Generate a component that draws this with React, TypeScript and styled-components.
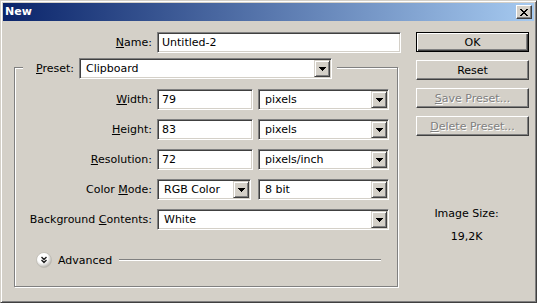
import React from 'react'
import styled, { createGlobalStyle, css } from 'styled-components'

const GlobalStyle = createGlobalStyle`
  html, body {
    margin: 0;
    padding: 0;
    background: #d4d0c8;
  }
  body {
    font-family: 'DejaVu Sans', 'Liberation Sans', sans-serif;
    font-size: 11px;
    color: #000;
  }
  * {
    box-sizing: border-box;
  }
`

const raised = css`
  background: #d4d0c8;
  border: 1px solid;
  border-color: #fff #404040 #404040 #fff;
  box-shadow: inset -1px -1px #808080;
`

const sunken = css`
  background: #fff;
  border: 1px solid;
  border-color: #808080 #fff #fff #808080;
  box-shadow: inset 1px 1px #404040, inset -1px -1px #d4d0c8;
`

const Window = styled.div`
  width: 537px;
  height: 303px;
  background: #d4d0c8;
  border: 1px solid;
  border-color: #d4d0c8 #404040 #404040 #d4d0c8;
  box-shadow: inset 1px 1px #fff, inset -1px -1px #808080;
  padding: 2px;
  display: flex;
  flex-direction: column;
`

const TitleBar = styled.div`
  height: 18px;
  flex: none;
  background: linear-gradient(to right, #0a246a, #a6caf0);
  display: flex;
  align-items: center;
  justify-content: space-between;
  padding: 0 2px 0 2px;
`

const Title = styled.span`
  color: #fff;
  font-weight: bold;
  font-size: 11px;
  line-height: 18px;
`

const CloseButton = styled.div`
  ${raised};
  width: 16px;
  height: 14px;
  display: flex;
  align-items: center;
  justify-content: center;
`

const Body = styled.div`
  display: flex;
  padding: 11px 0 0 11px;
`

const FormColumn = styled.div`
  width: 387px;
  display: flex;
  flex-direction: column;
`

const Row = styled.div`
  display: grid;
  grid-template-columns: 137px auto;
  column-gap: 5px;
  align-items: center;
`

const NameRow = styled(Row)`
  grid-template-columns: 138px 244px;
`

const Label = styled.label`
  text-align: right;
  white-space: nowrap;
`

const U = styled.span`
  text-decoration: underline;
`

const Fields = styled.div`
  display: grid;
  grid-template-columns: 96px 131px;
  column-gap: 5px;
`

const TextInput = styled.div<{ $w?: number }>`
  ${sunken};
  width: ${p => (p.$w ? `${p.$w}px` : '100%')};
  height: 21px;
  padding: 0 4px;
  display: flex;
  align-items: center;
  white-space: nowrap;
`

const SelectBox = styled.div<{ $w: number }>`
  ${sunken};
  width: ${p => p.$w}px;
  height: 21px;
  padding: 1px 1px 1px 6px;
  display: flex;
  align-items: center;
  justify-content: space-between;
  white-space: nowrap;
`

const DropButton = styled.div`
  background: #d4d0c8;
  border: 1px solid;
  border-color: #d4d0c8 #404040 #404040 #d4d0c8;
  box-shadow: inset 1px 1px #fff, inset -1px -1px #808080;
  width: 16px;
  height: 17px;
  flex: none;
  display: flex;
  align-items: center;
  justify-content: center;
`

const GroupBox = styled.fieldset`
  width: 384px;
  margin: 2px 0 0 0;
  padding: 10px 0 18px 0;
  border: 1px solid #808080;
  box-shadow: inset 1px 1px #fff, 1px 1px #fff;
  min-width: 0;
  display: flex;
  flex-direction: column;
  gap: 9px;
`

const Legend = styled.legend`
  margin-left: 8px;
  padding: 3px 5px 0 13px;
  background: #d4d0c8;
`

const LegendInner = styled.div`
  display: flex;
  align-items: center;
  gap: 5px;
`

const AdvancedRow = styled.div`
  display: flex;
  align-items: center;
  height: 16px;
  margin-top: 13px;
  padding: 0 16px 0 21px;
  gap: 6px;
`

const Rule = styled.div`
  flex: 1;
  margin-left: 1px;
  border-top: 1px solid #808080;
  border-bottom: 1px solid #fff;
`

const SideColumn = styled.div`
  width: 113px;
  margin-left: 15px;
  display: flex;
  flex-direction: column;
  gap: 8px;
`

const Button = styled.div<{ $default?: boolean; $disabled?: boolean }>`
  ${raised};
  height: 20px;
  display: flex;
  align-items: center;
  justify-content: center;
  ${p =>
    p.$default &&
    css`
      border: 1px solid #000;
      box-shadow: inset 1px 1px #fff, inset -1px -1px #404040, inset -2px -2px #808080;
    `}
  ${p =>
    p.$disabled &&
    css`
      color: #808080;
      text-shadow: 1px 1px #fff;
    `}
`

const SizeInfo = styled.div`
  margin-top: 63px;
  padding-right: 12px;
  text-align: center;
  display: flex;
  flex-direction: column;
  gap: 10px;
  line-height: 13px;
`

const Arrow = () => (
  <svg width='7' height='4' viewBox='0 0 7 4'>
    <path d='M0 0h7v1h-1v1h-1v1h-1v1h-1v-1h-1v-1h-1v-1h-1z' fill='#000' />
  </svg>
)

const Select = ({ w, value }: { w: number; value: string }) => (
  <SelectBox $w={w}>
    <span>{value}</span>
    <DropButton>
      <Arrow />
    </DropButton>
  </SelectBox>
)

const CloseGlyph = () => (
  <svg width='8' height='7' viewBox='0 0 8 7' shapeRendering='crispEdges'>
    <path
      d='M0 0h2v1h-2zM6 0h2v1h-2zM1 1h2v1h-2zM5 1h2v1h-2zM2 2h4v1h-4zM3 3h2v1h-2zM2 4h4v1h-4zM1 5h2v1h-2zM5 5h2v1h-2zM0 6h2v1h-2zM6 6h2v1h-2z'
      fill='#000'
    />
  </svg>
)

const AdvancedIcon = () => (
  <svg width='16' height='16' viewBox='0 0 16 16'>
    <defs>
      <radialGradient id='adv' cx='0.4' cy='0.35' r='0.7'>
        <stop offset='0.5' stopColor='#ffffff' />
        <stop offset='1' stopColor='#a8a59e' />
      </radialGradient>
    </defs>
    <circle cx='8' cy='8' r='7.5' fill='url(#adv)' stroke='#bdbab2' strokeWidth='0.8' />
    <path d='M5.5 5l2.5 2.5 2.5-2.5M5.5 8l2.5 2.5 2.5-2.5' fill='none' stroke='#202020' strokeWidth='1.4' />
  </svg>
)

const rows = [
  { label: ['', 'W', 'idth:'], value: '79', unit: 'pixels' },
  { label: ['', 'H', 'eight:'], value: '83', unit: 'pixels' },
  { label: ['', 'R', 'esolution:'], value: '72', unit: 'pixels/inch' }
]

const App = () => (
  <>
    <GlobalStyle />
    <Window>
      <TitleBar>
        <Title>New</Title>
        <CloseButton>
          <CloseGlyph />
        </CloseButton>
      </TitleBar>
      <Body>
        <FormColumn>
          <NameRow>
            <Label>
              <U>N</U>ame:
            </Label>
            <TextInput>Untitled-2</TextInput>
          </NameRow>
          <GroupBox>
            <Legend>
              <LegendInner>
                <Label>
                  <U>P</U>reset:
                </Label>
                <Select w={253} value='Clipboard' />
              </LegendInner>
            </Legend>
            {rows.map(r => (
              <Row key={r.value}>
                <Label>
                  {r.label[0]}
                  <U>{r.label[1]}</U>
                  {r.label[2]}
                </Label>
                <Fields>
                  <TextInput $w={96}>{r.value}</TextInput>
                  <Select w={131} value={r.unit} />
                </Fields>
              </Row>
            ))}
            <Row>
              <Label>
                Color <U>M</U>ode:
              </Label>
              <Fields>
                <Select w={94} value='RGB Color' />
                <Select w={131} value='8 bit' />
              </Fields>
            </Row>
            <Row>
              <Label>
                Background <U>C</U>ontents:
              </Label>
              <Select w={232} value='White' />
            </Row>
            <AdvancedRow>
              <AdvancedIcon />
              <span>Advanced</span>
              <Rule />
            </AdvancedRow>
          </GroupBox>
        </FormColumn>
        <SideColumn>
          <Button $default>OK</Button>
          <Button>Reset</Button>
          <Button $disabled>
            <span>
              <U>S</U>ave Preset...
            </span>
          </Button>
          <Button $disabled>
            <span>
              <U>D</U>elete Preset...
            </span>
          </Button>
          <SizeInfo>
            <span>Image Size:</span>
            <span>19,2K</span>
          </SizeInfo>
        </SideColumn>
      </Body>
    </Window>
  </>
)

export default App
